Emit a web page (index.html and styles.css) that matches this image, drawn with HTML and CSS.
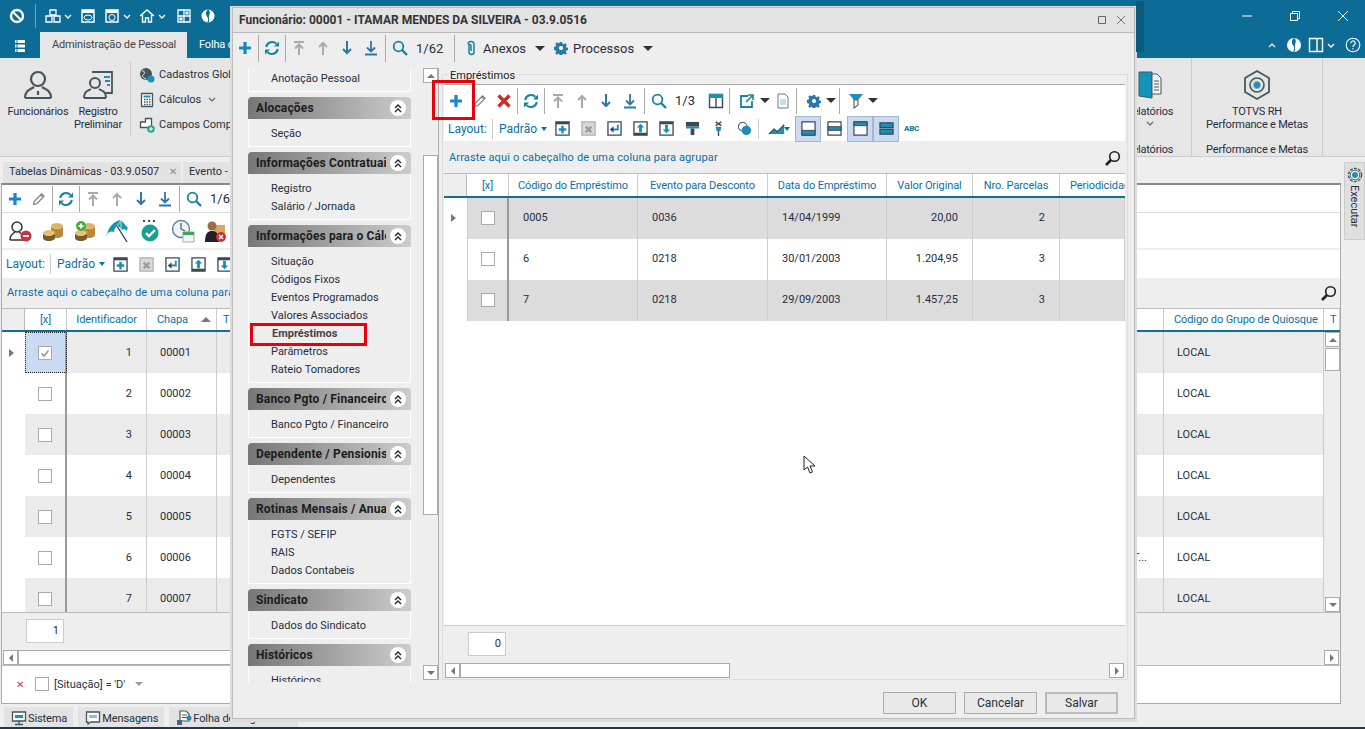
FILE: index.html
```html
<!DOCTYPE html>
<html>
<head>
    <title>Funcionário - TOTVS RH</title>
    <meta charset="utf-8">
    <meta name="viewport" content="width=device-width, initial-scale=1">
    <link rel="stylesheet" href="styles.css">
</head>
<body>
    <svg class="defs">
        <symbol id="i-plus" viewBox="0 0 16 16"><path d="M8 2v12M2 8h12" fill="none" stroke="currentColor" stroke-width="3.2"/></symbol>
        <symbol id="i-pencil" viewBox="0 0 16 16"><path d="M2.5 13.5l.8-3.2 7.4-7.4 2.4 2.4-7.4 7.4zM9.7 3.9l2.4 2.4" fill="none" stroke="currentColor" stroke-width="1.1"/></symbol>
        <symbol id="i-x" viewBox="0 0 16 16"><path d="M2.5 2.5l11 11M13.5 2.5l-11 11" fill="none" stroke="currentColor" stroke-width="3.4"/></symbol>
        <symbol id="i-refresh" viewBox="0 0 16 16"><path d="M2.2 7A6 6 0 0 1 12.4 3.8M13.8 9A6 6 0 0 1 3.6 12.2" fill="none" stroke="currentColor" stroke-width="2"/><path d="M15 1.6v5h-5zM1 14.4v-5h5z" fill="currentColor"/></symbol>
        <symbol id="i-top" viewBox="0 0 16 16"><path d="M3 2h10M8 15V5M4 8.5l4-4 4 4" fill="none" stroke="currentColor" stroke-width="2"/></symbol>
        <symbol id="i-up" viewBox="0 0 16 16"><path d="M8 15V3M4 7l4-4 4 4" fill="none" stroke="currentColor" stroke-width="2"/></symbol>
        <symbol id="i-down" viewBox="0 0 16 16"><path d="M8 1v12M4 9l4 4 4-4" fill="none" stroke="currentColor" stroke-width="2"/></symbol>
        <symbol id="i-bottom" viewBox="0 0 16 16"><path d="M8 1v10M4 7.5l4 4 4-4M2 14.5h12" fill="none" stroke="currentColor" stroke-width="1.8"/></symbol>
        <symbol id="i-search" viewBox="0 0 16 16"><circle cx="6.5" cy="6.5" r="4.8" fill="none" stroke="currentColor" stroke-width="1.8"/><path d="M10 10l5 5" stroke="currentColor" stroke-width="2.4"/></symbol>
        <symbol id="i-lens" viewBox="0 0 16 16"><circle cx="9.5" cy="6.5" r="4.8" fill="none" stroke="currentColor" stroke-width="1.6"/><path d="M6 10l-5 5" stroke="currentColor" stroke-width="2.6"/></symbol>
        <symbol id="i-clip" viewBox="0 0 16 16"><path d="M5 4.5a3 3 0 0 1 6 0v7.5a2.5 2.5 0 0 1-5 0V5.500a1 1 0 0 1 2 0V11" fill="none" stroke="currentColor" stroke-width="1.5"/></symbol>
        <symbol id="i-gear" viewBox="0 0 16 16"><path d="M6.7 1h2.600l.4 2 1.400.6 1.700-1.100 1.800 1.800-1.100 1.700.6 1.400 2 .4v2.600l-2 .4-.6 1.400 1.100 1.700-1.800 1.800-1.700-1.100-1.400.6-.4 2H6.700l-.4-2-1.400-.6-1.700 1.100-1.800-1.800 1.100-1.700-.6-1.400-2-.4V6.700l2-.4.6-1.400-1.100-1.700 1.800-1.800 1.700 1.100 1.400-.6z" fill="currentColor"/><circle cx="8" cy="8" r="2.400" fill="#fff"/></symbol>
        <symbol id="i-cols" viewBox="0 0 16 16"><path d="M1.5 1.5h13v13h-13zM8 5v9.500" fill="none" stroke="#3a4a55" stroke-width="1.4"/><path d="M1 1h14v4H1z" fill="#1b8fb5"/></symbol>
        <symbol id="i-export" viewBox="0 0 16 16"><path d="M9 3H2v11h11V8" fill="none" stroke="currentColor" stroke-width="1.8"/><path d="M7 9l6-6M9 2h5v5" fill="none" stroke="currentColor" stroke-width="1.6"/></symbol>
        <symbol id="i-doc" viewBox="0 0 16 16"><path d="M3 1h7l3 3v11H3z" fill="#fff" stroke="#6b7b86"/><path d="M5 6h6v6H5z" fill="#bfe0e8"/></symbol>
        <symbol id="i-funnel" viewBox="0 0 16 16"><path d="M1 1h14L10 7H6z" fill="#1b8fb5"/><path d="M6 7h4v5l-4 3z" fill="none" stroke="#5a6870" stroke-width="1.2"/></symbol>
        <symbol id="i-box-plus" viewBox="0 0 16 16"><path d="M1 1h14v14H1z" fill="#fff" stroke="#3a4a55" stroke-width="1.4"/><path d="M1 1h14v2.500H1z" fill="#3a4a55"/><path d="M8 5v8M4 9h8" stroke="#1b8fb5" stroke-width="2.6"/></symbol>
        <symbol id="i-box-x" viewBox="0 0 16 16"><path d="M1 1h14v14H1z" fill="#d8d8d8" stroke="#b0b0b0" stroke-width="1.4"/><path d="M5 6l6 6M11 6l-6 6" stroke="#9a9a9a" stroke-width="2.4"/></symbol>
        <symbol id="i-box-enter" viewBox="0 0 16 16"><path d="M1 1h14v14H1z" fill="#fff" stroke="#3a4a55" stroke-width="1.4"/><path d="M11.5 4v5H6" fill="none" stroke="#1b8fb5" stroke-width="2"/><path d="M7 5.500v7L3 9z" fill="#3a4a55"/></symbol>
        <symbol id="i-box-up" viewBox="0 0 16 16"><path d="M1 1h14v14H1z" fill="#fff" stroke="#3a4a55" stroke-width="1.4"/><path d="M1 12.500h14V15H1z" fill="#3a4a55"/><path d="M8 3l4 4H9.500v5h-3V7H4z" fill="#1b8fb5"/></symbol>
        <symbol id="i-box-down" viewBox="0 0 16 16"><path d="M1 1h14v14H1z" fill="#fff" stroke="#3a4a55" stroke-width="1.4"/><path d="M1 1h14v2.500H1z" fill="#3a4a55"/><path d="M8 13l4-4H9.500V4h-3v5H4z" fill="#1b8fb5"/></symbol>
        <symbol id="i-roller" viewBox="0 0 16 16"><path d="M1 1h14v5H1z" fill="#3a4a55"/><path d="M1 6h14v2H1z" fill="#1b8fb5"/><path d="M6 8h4v7H6z" fill="#3a4a55"/></symbol>
        <symbol id="i-pin" viewBox="0 0 16 16"><path d="M5 1l6 4M11 1L5 5" stroke="#3a4a55" stroke-width="1.5"/><path d="M5 6h6l-1 5H6z" fill="#1b8fb5"/><path d="M8 11v5" stroke="#3a4a55" stroke-width="1.5"/></symbol>
        <symbol id="i-circles" viewBox="0 0 16 16"><circle cx="6" cy="6" r="4.5" fill="#fff" stroke="#5a6870" stroke-width="1.2"/><circle cx="10" cy="10" r="5" fill="#1b8fb5"/></symbol>
        <symbol id="i-chart" viewBox="0 0 20 16"><path d="M1 14l6-6 4 3 8-8v11z" fill="#1b8fb5"/><path d="M1 14l6-6 4 3 8-8" fill="none" stroke="#3a4a55" stroke-width="1.4"/></symbol>
        <symbol id="i-view-bottom" viewBox="0 0 16 16"><path d="M1 1h14v14H1z" fill="#fff" stroke="#3a4a55" stroke-width="1.3"/><path d="M1 10h14v5H1z" fill="#1b8fb5" stroke="#3a4a55"/></symbol>
        <symbol id="i-view-mid" viewBox="0 0 16 16"><path d="M1 1h14v14H1z" fill="#fff" stroke="#3a4a55" stroke-width="1.3"/><path d="M1 6h14v4H1z" fill="#1b8fb5" stroke="#3a4a55"/></symbol>
        <symbol id="i-view-top" viewBox="0 0 16 16"><path d="M1 1h14v14H1z" fill="#fff" stroke="#3a4a55" stroke-width="1.3"/><path d="M1 1h14v4H1z" fill="#1b8fb5" stroke="#3a4a55"/></symbol>
        <symbol id="i-view-two" viewBox="0 0 16 16"><path d="M1 2h14v5H1zM1 9h14v5H1z" fill="#1b8fb5" stroke="#3a4a55" stroke-width="1.3"/></symbol>
        <symbol id="i-coins" viewBox="0 0 24 24"><ellipse cx="16" cy="7" rx="6" ry="3" fill="#e0b560"/><path d="M10 7v9c0 1.600 2.700 3 6 3s6-1.400 6-3V7c0 1.600-2.700 3-6 3s-6-1.400-6-3z" fill="#b98a3c"/><ellipse cx="8" cy="14" rx="6" ry="3" fill="#eac070"/><path d="M2 14v5c0 1.600 2.700 3 6 3s6-1.400 6-3v-5c0 1.600-2.700 3-6 3s-6-1.400-6-3z" fill="#7c5a28"/></symbol>
    </svg>

    <div class="app">
        <div class="topbar">
            <div class="qa">
                <svg class="qa-ic first" viewBox="0 0 16 16"><circle cx="8" cy="8" r="6" fill="none" stroke="#fff" stroke-width="2.4"/><path d="M4 4l8 8" stroke="#fff" stroke-width="2"/></svg>
                <span class="qa-sep"></span>
                <svg class="qa-ic" viewBox="0 0 16 16"><path d="M5 2h6v5H5zM1 8h6v6H1zM9 8h6v6H9z" fill="#0d6c96" stroke="#fff" stroke-width="1.3"/></svg>
                <svg class="chev" viewBox="0 0 8 5"><path d="M1 1l3 3 3-3" fill="none" stroke="#fff" stroke-width="1.3"/></svg>
                <svg class="qa-ic" viewBox="0 0 16 16"><path d="M2 2h12v12H2z" fill="none" stroke="#fff" stroke-width="1.4"/><path d="M2 2h12v3H2z" fill="#fff"/><ellipse cx="8" cy="9.500" rx="4" ry="2.500" fill="none" stroke="#fff"/></svg>
                <svg class="qa-ic" viewBox="0 0 16 16"><path d="M2 2h12v12H2z" fill="none" stroke="#fff" stroke-width="1.4"/><path d="M2 2h12v3H2z" fill="#fff"/><circle cx="8" cy="9.500" r="3" fill="none" stroke="#fff"/></svg>
                <svg class="chev" viewBox="0 0 8 5"><path d="M1 1l3 3 3-3" fill="none" stroke="#fff" stroke-width="1.3"/></svg>
                <svg class="qa-ic" viewBox="0 0 16 16"><path d="M1 8l7-6 7 6M3.500 7v7h3v-4h3v4h3V7" fill="none" stroke="#fff" stroke-width="1.4"/></svg>
                <svg class="chev" viewBox="0 0 8 5"><path d="M1 1l3 3 3-3" fill="none" stroke="#fff" stroke-width="1.3"/></svg>
                <svg class="qa-ic grid-ic" viewBox="0 0 16 16"><path d="M2 2h12v12H2zM8 2v12M2 8h12" fill="none" stroke="#fff" stroke-width="1.3"/><path d="M9.500 3.500h3v3h-3zM3.500 9.500h3v3h-3z" fill="#fff"/></svg>
                <svg class="qa-ic" viewBox="0 0 16 16"><circle cx="8" cy="8" r="6.500" fill="#fff"/><path d="M8 1.500c-2 2-3 4-1 7s1 5 0 6c3.500 0 1.500-3 2-6s2-5-1-7z" fill="#0d6c96"/></svg>
                <div class="winbtns">
                    <svg class="win" viewBox="0 0 12 12"><path d="M1 6h10" stroke="#fff"/></svg>
                    <svg class="win" viewBox="0 0 12 12"><path d="M1.500 3.500h7v7h-7zM3.500 3.500v-2h7v7h-2" fill="none" stroke="#fff"/></svg>
                    <svg class="win" viewBox="0 0 12 12"><path d="M1 1l10 10M11 1L1 11" stroke="#fff"/></svg>
                </div>
            </div>
            <div class="tabrow">
                <svg class="menu-ic" viewBox="0 0 16 16"><path d="M3 2h10v3H3zM3 6.500h10v3H3zM3 11h10v3H3z" fill="#fff"/><path d="M5 2v12" stroke="#0d6c96"/></svg>
                <div class="rtab on">Administração de Pessoal</div>
                <div class="rtab">Folha de Pagamento</div>
                <div class="tabrow-right">
                    <svg class="chev up" viewBox="0 0 8 5"><path d="M1 4l3-3 3 3" fill="none" stroke="#fff" stroke-width="1.2"/></svg>
                    <svg class="qa-ic" viewBox="0 0 16 16"><circle cx="8" cy="8" r="7" fill="#fff"/><path d="M8 1c-2 2-3 4-1 7s1 5 0 7c3.500 0 1.500-4 2-7s2-5-1-7z" fill="#0d6c96"/></svg>
                    <svg class="qa-ic" viewBox="0 0 16 16"><path d="M1.500 1.500h13v13h-13zM9 1.500v13" fill="none" stroke="#fff" stroke-width="1.4"/></svg>
                    <svg class="chev" viewBox="0 0 8 5"><path d="M1 1l3 3 3-3" fill="none" stroke="#fff" stroke-width="1.3"/></svg>
                    <svg class="qa-ic help" viewBox="0 0 16 16"><circle cx="8" cy="8" r="6.800" fill="none" stroke="#fff" stroke-width="1.1"/><path d="M5.800 6.200a2.200 2.200 0 1 1 3.300 1.900c-.8.500-1.100.9-1.100 1.900M8 11.200v1.400" fill="none" stroke="#fff" stroke-width="1.2"/></svg>
                </div>
            </div>
        </div>

        <div class="ribbon">
            <div class="big first">
                <svg class="big-ic" viewBox="0 0 32 32"><circle cx="16" cy="10" r="7" fill="none" stroke="#46565e" stroke-width="2.2"/><path d="M3 29c0-8 6-9 9-11M29 29c0-8-6-9-9-11M3 29h26M16 22v4" fill="none" stroke="#46565e" stroke-width="2.2"/></svg>
                <span>Funcionários</span>
            </div>
            <div class="big">
                <svg class="big-ic" viewBox="0 0 32 32"><path d="M10 3h20v21H22" fill="none" stroke="#46565e" stroke-width="1.8"/><path d="M22 8h6M23 12h5M25 16h3" stroke="#1b8fb5" stroke-width="1.8"/><circle cx="13" cy="14" r="5" fill="#e6e6e6" stroke="#46565e" stroke-width="2"/><path d="M2 29c0-7 4-7 7-9M24 29c0-7-4-7-7-9M2 29h22" fill="none" stroke="#46565e" stroke-width="2"/></svg>
                <span>Registro<br>Preliminar</span>
            </div>
            <div class="rb-sep"></div>
            <div class="small-list">
                <div class="small"><svg viewBox="0 0 16 16"><circle cx="7" cy="7" r="6" fill="#46565e"/><path d="M3 4c3-1 3 3 1 4s2 4 3 4" fill="none" stroke="#e6e6e6"/><circle cx="12" cy="12" r="3.500" fill="#1b8fb5"/></svg>Cadastros Globais</div>
                <div class="small"><svg viewBox="0 0 16 16"><path d="M2.500 1.500h11v13h-11z" fill="#fff" stroke="#46565e" stroke-width="1.3"/><path d="M4.500 3.500h7v2h-7z" fill="#1b8fb5"/><path d="M5 7.500h1.500M7.500 7.500H9M10 7.500h1.500M5 10h1.500M7.500 10H9M10 10h1.500M5 12.500h1.500M7.500 12.500H9M10 12.500h1.500" stroke="#46565e" stroke-width="1.3"/></svg>Cálculos <svg class="chev dark" viewBox="0 0 8 5"><path d="M1 1l3 3 3-3" fill="none" stroke="#666" stroke-width="1.2"/></svg></div>
                <div class="small"><svg viewBox="0 0 16 16"><path d="M1.500 5h5V1.500h6v9h-11z" fill="#fff" stroke="#46565e" stroke-width="1.3"/><circle cx="12" cy="12" r="3.800" fill="#2aa58e"/><path d="M12 10v4M10 12h4" stroke="#fff"/></svg>Campos Complementares</div>
            </div>
            <div class="rb-fill"></div>
            <div class="rb-group relat">
                <div class="big wide">
                    <svg class="big-ic" viewBox="0 0 32 32"><path d="M5 3h13v26l-13-2z" fill="#1294bd" stroke="#46565e"/><path d="M18 5h5l4 4v16h-9z" fill="#f4f4f4" stroke="#46565e"/><path d="M20 12h5M20 15h5M20 18h5M20 21h5" stroke="#46565e"/></svg>
                    <span>Relatórios</span>
                    <svg class="chev dark below" viewBox="0 0 8 5"><path d="M1 1l3 3 3-3" fill="none" stroke="#666" stroke-width="1.2"/></svg>
                </div>
                <div class="rb-label">Relatórios</div>
            </div>
            <div class="rb-group perf">
                <div class="big wide">
                    <svg class="big-ic" viewBox="0 0 32 32"><path d="M16 2l12 7v14l-12 7-12-7V9z" fill="none" stroke="#46565e" stroke-width="1.8"/><circle cx="16" cy="16" r="7" fill="none" stroke="#46565e" stroke-width="1.6"/><circle cx="16" cy="16" r="3.500" fill="#1294bd" stroke="#8aa" stroke-width=".8"/></svg>
                    <span>TOTVS RH<br>Performance e Metas</span>
                </div>
                <div class="rb-label">Performance e Metas</div>
            </div>
            <div class="rb-end"></div>
        </div>

        <div class="workspace">
            <div class="doc">
                <div class="doctabs">
                    <div class="doctab">Tabelas Dinâmicas - 03.9.0507<span class="doctab-x">✕</span></div>
                    <div class="doctab">Evento - 03.9.0501</div>
                </div>
                <div class="docwin">
                    <div class="tb tb-a">
                        <span class="tool blue"><svg><use href="#i-plus"/></svg></span>
                        <span class="tool gray"><svg><use href="#i-pencil"/></svg></span>
                        <span class="sep"></span>
                        <span class="tool teal"><svg><use href="#i-refresh"/></svg></span>
                        <span class="sep"></span>
                        <span class="tool pale"><svg><use href="#i-top"/></svg></span>
                        <span class="tool pale"><svg><use href="#i-up"/></svg></span>
                        <span class="tool navy"><svg><use href="#i-down"/></svg></span>
                        <span class="tool navy"><svg><use href="#i-bottom"/></svg></span>
                        <span class="sep wide"></span>
                        <span class="tool teal"><svg><use href="#i-search"/></svg></span>
                        <span class="count">1/62</span>
                    </div>
                    <div class="tb tb-b">
                        <svg class="pic" viewBox="0 0 24 24"><circle cx="9" cy="8" r="5" fill="#fff" stroke="#333" stroke-width="1.5"/><path d="M2 21c0-6 3-6 5-8M16 21c0-6-3-6-5-8M2 21h14" fill="none" stroke="#333" stroke-width="1.5"/><circle cx="18" cy="17" r="5.500" fill="#c8323a"/><path d="M15 17h6" stroke="#fff" stroke-width="1.8"/></svg>
                        <svg class="pic"><use href="#i-coins"/></svg>
                        <svg class="pic" viewBox="0 0 24 24"><use href="#i-coins"/><circle cx="8" cy="7" r="5" fill="#35b03c"/><path d="M8 4.500v5M5.500 7h5" stroke="#fff" stroke-width="1.8"/></svg>
                        <svg class="pic" viewBox="0 0 24 24"><path d="M1 16C2 8 8 2 15 1l7 8c-1 1-1 2-1 3-2-2-4-2-6-1 0-2-2-4-4-4-2 2-3 4-3 6-2-1-5-1-8 3z" fill="#1596b0"/><path d="M11 7l10 16" stroke="#345" stroke-width="1.4"/><path d="M15 1l-4 6M15 1l0 10" stroke="#fff" stroke-width=".7"/></svg>
                        <svg class="pic" viewBox="0 0 24 24"><circle cx="12" cy="14" r="8.500" fill="#16a091"/><path d="M8 14l3 3 6-6" fill="none" stroke="#fff" stroke-width="2.4"/><path d="M5 2h2M10 2h2M15 2h2" stroke="#444" stroke-width="2"/></svg>
                        <svg class="pic" viewBox="0 0 24 24"><circle cx="10" cy="10" r="8.500" fill="#eaf2fa" stroke="#5a80a8" stroke-width="1.4"/><path d="M10 4v6l4 2" fill="none" stroke="#456" stroke-width="1.2"/><path d="M12 13h11v10H12z" fill="#f4f4f4" stroke="#aaa"/><path d="M12 13h11v3H12z" fill="#3aaa50"/></svg>
                        <svg class="pic" viewBox="0 0 24 24"><path d="M11 6h11v11H11z" fill="#d8a860"/><circle cx="9" cy="7" r="4.500" fill="#a06a48"/><path d="M2 23c0-9 3-11 7-11s7 2 7 11z" fill="#222"/><circle cx="18" cy="18" r="5" fill="#c8323a"/><path d="M16 16l4 4M20 16l-4 4" stroke="#fff" stroke-width="1.2"/></svg>
                    </div>
                    <div class="tb tb-c back-layout">
                        <span class="lay-label">Layout:</span>
                        <span class="sep short"></span>
                        <span class="lay-name">Padrão<i class="caret blue-caret"></i></span>
                        <span class="lay-ic"><svg><use href="#i-box-plus"/></svg></span>
                        <span class="lay-ic"><svg><use href="#i-box-x"/></svg></span>
                        <span class="lay-ic"><svg><use href="#i-box-enter"/></svg></span>
                        <span class="lay-ic"><svg><use href="#i-box-up"/></svg></span>
                        <span class="lay-ic"><svg><use href="#i-box-down"/></svg></span>
                    </div>
                    <div class="dragbar back-drag">
                        <span>Arraste aqui o cabeçalho de uma coluna para agrupar</span>
                        <svg class="lens"><use href="#i-lens"/></svg>
                    </div>
                    <div class="bgrid-head">
                        <div class="gh ind"></div>
                        <div class="gh ctr">[x]</div>
                        <div class="gh ctr">Identificador</div>
                        <div class="gh sorted">Chapa<i class="sort"></i></div>
                        <div class="gh">Tipo</div>
                        <div class="gh wide-gh">Código do Grupo de Quiosque</div>
                        <div class="gh last">T</div>
                    </div>
                    <div class="bgrid-body">
                        <div class="bgrid-rows">
                            <div class="brow odd">
                                <div class="gc ind"><i class="tri"></i></div>
                                <div class="gc chk focus"><span class="cb checked"><svg viewBox="0 0 12 12"><path d="M2.500 6.500l2.500 2.500 4.500-5.500" fill="none" stroke="#888" stroke-width="1.2"/></svg></span></div>
                                <div class="gc num">1</div>
                                <div class="gc code">00001</div>
                                <div class="gc"></div>
                                <div class="gc code">LOCAL</div>
                            </div>
                            <div class="brow">
                                <div class="gc ind"></div>
                                <div class="gc chk"><span class="cb"></span></div>
                                <div class="gc num">2</div>
                                <div class="gc code">00002</div>
                                <div class="gc"></div>
                                <div class="gc code">LOCAL</div>
                            </div>
                            <div class="brow odd">
                                <div class="gc ind"></div>
                                <div class="gc chk"><span class="cb"></span></div>
                                <div class="gc num">3</div>
                                <div class="gc code">00003</div>
                                <div class="gc"></div>
                                <div class="gc code">LOCAL</div>
                            </div>
                            <div class="brow">
                                <div class="gc ind"></div>
                                <div class="gc chk"><span class="cb"></span></div>
                                <div class="gc num">4</div>
                                <div class="gc code">00004</div>
                                <div class="gc"></div>
                                <div class="gc code">LOCAL</div>
                            </div>
                            <div class="brow odd">
                                <div class="gc ind"></div>
                                <div class="gc chk"><span class="cb"></span></div>
                                <div class="gc num">5</div>
                                <div class="gc code">00005</div>
                                <div class="gc"></div>
                                <div class="gc code">LOCAL</div>
                            </div>
                            <div class="brow">
                                <div class="gc ind"></div>
                                <div class="gc chk"><span class="cb"></span></div>
                                <div class="gc num">6</div>
                                <div class="gc code">00006</div>
                                <div class="gc rest">T...</div>
                                <div class="gc code">LOCAL</div>
                            </div>
                            <div class="brow odd">
                                <div class="gc ind"></div>
                                <div class="gc chk"><span class="cb"></span></div>
                                <div class="gc num">7</div>
                                <div class="gc code">00007</div>
                                <div class="gc"></div>
                                <div class="gc code">LOCAL</div>
                            </div>
                        </div>
                        <div class="vscroll">
                            <span class="sbtn"><i class="arr-up"></i></span>
                            <span class="vthumb"></span>
                            <span class="vfill"></span>
                            <span class="sbtn"><i class="arr-down"></i></span>
                        </div>
                    </div>
                    <div class="totals back-totals"><span class="total-box">1</span></div>
                    <div class="hscroll back-h">
                        <span class="sbtn"><i class="arr-left"></i></span>
                        <span class="hthumb long"></span>
                        <span class="sbtn"><i class="arr-right"></i></span>
                    </div>
                    <div class="filterbar">
                        <span class="fx">✕</span>
                        <span class="cb"></span>
                        <span class="ftext">[Situação] = 'D'</span>
                        <i class="caret gray-caret"></i>
                    </div>
                </div>
            </div>
            <div class="side">
                <div class="side-tab">
                    <svg class="side-gear" viewBox="0 0 18 18"><circle cx="9" cy="9" r="6.500" fill="#fff" stroke="#46565e" stroke-width="1.5" stroke-dasharray="3 1.100"/><circle cx="9" cy="9" r="4.800" fill="none" stroke="#46565e"/><circle cx="9" cy="9" r="3" fill="#1294bd"/></svg>
                    <span>Executar</span>
                </div>
            </div>
        </div>

        <div class="statusbar">
            <div class="stab"><svg viewBox="0 0 16 16"><path d="M1.500 2h13v9h-13z" fill="#fff" stroke="#46565e" stroke-width="1.3"/><path d="M4 5h8v3H4z" fill="#1b8fb5"/><path d="M8 11v3M4 14.500h8" stroke="#46565e" stroke-width="1.3"/></svg>Sistema</div>
            <div class="stab"><svg viewBox="0 0 16 16"><path d="M1.500 2h13v10H6l-3 2v-2H1.500z" fill="#fff" stroke="#46565e" stroke-width="1.3"/><path d="M4 5h8v3H4z" fill="#7fc4dc"/></svg>Mensagens</div>
            <div class="stab"><svg viewBox="0 0 16 16"><path d="M4 1h6l3 3v7H4z" fill="#fff" stroke="#46565e" stroke-width="1.2"/><path d="M6 5h5M6 7.500h5" stroke="#46565e"/><path d="M1 10h5v5H1z" fill="#3a6a86"/><circle cx="13" cy="8" r="2.500" fill="#1b8fb5"/></svg>Folha de Pagamento</div>
        </div>
    </div>

    <div class="dialog">
        <div class="dlg-shade"></div>
        <div class="dlg-title">
            <span class="dlg-name">Funcionário: 00001 - ITAMAR MENDES DA SILVEIRA - 03.9.0516</span>
            <svg class="dlg-btn" viewBox="0 0 10 10"><path d="M1.500 1.500h7v7h-7z" fill="none" stroke="#666"/></svg>
            <svg class="dlg-btn" viewBox="0 0 10 10"><path d="M1 1l8 8M9 1L1 9" stroke="#777"/></svg>
        </div>
        <div class="tb dlg-tools">
            <span class="tool blue"><svg><use href="#i-plus"/></svg></span>
            <span class="sep tall"></span>
            <span class="tool teal"><svg><use href="#i-refresh"/></svg></span>
            <span class="sep tall"></span>
            <span class="tool pale"><svg><use href="#i-top"/></svg></span>
            <span class="tool pale"><svg><use href="#i-up"/></svg></span>
            <span class="tool navy"><svg><use href="#i-down"/></svg></span>
            <span class="tool navy"><svg><use href="#i-bottom"/></svg></span>
            <span class="sep tall wide"></span>
            <span class="tool teal"><svg><use href="#i-search"/></svg></span>
            <span class="count">1/62</span>
            <span class="sep tall after-count"></span>
            <span class="tool teal"><svg><use href="#i-clip"/></svg></span>
            <span class="tb-text">Anexos</span>
            <i class="caret dark-caret"></i>
            <span class="tool navy gear-tool"><svg><use href="#i-gear"/></svg></span>
            <span class="tb-text">Processos</span>
            <i class="caret dark-caret"></i>
        </div>
        <div class="dlg-body">
            <div class="nav">
                <div class="panel cut">
                    <div class="item">Anotação Pessoal</div>
                </div>
                <div class="ghead"><span>Alocações</span><i class="collapse"><svg viewBox="0 0 10 10"><path d="M2 5l3-3 3 3M2 9l3-3 3 3" fill="none" stroke="#222" stroke-width="1.3"/></svg></i></div>
                <div class="panel">
                    <div class="item">Seção</div>
                </div>
                <div class="ghead"><span>Informações Contratuais</span><i class="collapse"><svg viewBox="0 0 10 10"><path d="M2 5l3-3 3 3M2 9l3-3 3 3" fill="none" stroke="#222" stroke-width="1.3"/></svg></i></div>
                <div class="panel">
                    <div class="item">Registro</div>
                    <div class="item">Salário / Jornada</div>
                </div>
                <div class="ghead"><span>Informações para o Cálculo</span><i class="collapse"><svg viewBox="0 0 10 10"><path d="M2 5l3-3 3 3M2 9l3-3 3 3" fill="none" stroke="#222" stroke-width="1.3"/></svg></i></div>
                <div class="panel">
                    <div class="item">Situação</div>
                    <div class="item">Códigos Fixos</div>
                    <div class="item">Eventos Programados</div>
                    <div class="item">Valores Associados</div>
                    <div class="item current">Empréstimos</div>
                    <div class="item">Parâmetros</div>
                    <div class="item">Rateio Tomadores</div>
                </div>
                <div class="ghead"><span>Banco Pgto / Financeiro</span><i class="collapse"><svg viewBox="0 0 10 10"><path d="M2 5l3-3 3 3M2 9l3-3 3 3" fill="none" stroke="#222" stroke-width="1.3"/></svg></i></div>
                <div class="panel">
                    <div class="item">Banco Pgto / Financeiro</div>
                </div>
                <div class="ghead"><span>Dependente / Pensionista</span><i class="collapse"><svg viewBox="0 0 10 10"><path d="M2 5l3-3 3 3M2 9l3-3 3 3" fill="none" stroke="#222" stroke-width="1.3"/></svg></i></div>
                <div class="panel">
                    <div class="item">Dependentes</div>
                </div>
                <div class="ghead"><span>Rotinas Mensais / Anuais</span><i class="collapse"><svg viewBox="0 0 10 10"><path d="M2 5l3-3 3 3M2 9l3-3 3 3" fill="none" stroke="#222" stroke-width="1.3"/></svg></i></div>
                <div class="panel">
                    <div class="item">FGTS / SEFIP</div>
                    <div class="item">RAIS</div>
                    <div class="item">Dados Contabeis</div>
                </div>
                <div class="ghead"><span>Sindicato</span><i class="collapse"><svg viewBox="0 0 10 10"><path d="M2 5l3-3 3 3M2 9l3-3 3 3" fill="none" stroke="#222" stroke-width="1.3"/></svg></i></div>
                <div class="panel">
                    <div class="item">Dados do Sindicato</div>
                </div>
                <div class="ghead"><span>Históricos</span><i class="collapse"><svg viewBox="0 0 10 10"><path d="M2 5l3-3 3 3M2 9l3-3 3 3" fill="none" stroke="#222" stroke-width="1.3"/></svg></i></div>
                <div class="panel">
                    <div class="item">Históricos</div>
                </div>
            </div>
            <div class="nav-scroll">
                <span class="sbtn"><i class="arr-up"></i></span>
                <span class="nav-thumb"></span>
                <span class="vfill"></span>
                <span class="sbtn"><i class="arr-down"></i></span>
            </div>
            <div class="group">
                <span class="legend">Empréstimos</span>
                <div class="group-in">
                    <div class="tb tb-main">
                        <span class="tool blue"><svg><use href="#i-plus"/></svg></span>
                        <span class="tool gray"><svg><use href="#i-pencil"/></svg></span>
                        <span class="tool red"><svg><use href="#i-x"/></svg></span>
                        <span class="sep"></span>
                        <span class="tool teal"><svg><use href="#i-refresh"/></svg></span>
                        <span class="sep"></span>
                        <span class="tool pale"><svg><use href="#i-top"/></svg></span>
                        <span class="tool pale"><svg><use href="#i-up"/></svg></span>
                        <span class="tool navy"><svg><use href="#i-down"/></svg></span>
                        <span class="tool navy"><svg><use href="#i-bottom"/></svg></span>
                        <span class="sep wide"></span>
                        <span class="tool teal"><svg><use href="#i-search"/></svg></span>
                        <span class="count short">1/3</span>
                        <span class="tool cols"><svg><use href="#i-cols"/></svg></span>
                        <span class="sep"></span>
                        <span class="tool teal exp"><svg><use href="#i-export"/></svg></span>
                        <i class="caret dark-caret slim"></i>
                        <span class="tool"><svg><use href="#i-doc"/></svg></span>
                        <span class="sep"></span>
                        <span class="tool navy gear2"><svg><use href="#i-gear"/></svg></span>
                        <i class="caret dark-caret slim tight"></i>
                        <span class="sep sep-f"></span>
                        <span class="tool funnel"><svg><use href="#i-funnel"/></svg></span>
                        <i class="caret dark-caret slim tight"></i>
                    </div>
                    <div class="tb tb-c main-layout">
                        <span class="lay-label">Layout:</span>
                        <span class="sep short"></span>
                        <span class="lay-name">Padrão<i class="caret blue-caret"></i></span>
                        <span class="lay-ic"><svg><use href="#i-box-plus"/></svg></span>
                        <span class="lay-ic"><svg><use href="#i-box-x"/></svg></span>
                        <span class="lay-ic"><svg><use href="#i-box-enter"/></svg></span>
                        <span class="lay-ic"><svg><use href="#i-box-up"/></svg></span>
                        <span class="lay-ic"><svg><use href="#i-box-down"/></svg></span>
                        <span class="lay-ic"><svg><use href="#i-roller"/></svg></span>
                        <span class="lay-ic"><svg><use href="#i-pin"/></svg></span>
                        <span class="lay-ic"><svg><use href="#i-circles"/></svg></span>
                        <span class="sep short before-chart"></span>
                        <span class="lay-ic chart"><svg viewBox="0 0 20 16"><use href="#i-chart"/></svg></span>
                        <i class="caret blue-caret chart-caret"></i>
                        <span class="view on first-view"><svg><use href="#i-view-bottom"/></svg></span>
                        <span class="view"><svg><use href="#i-view-mid"/></svg></span>
                        <span class="view on"><svg><use href="#i-view-top"/></svg></span>
                        <span class="view on"><svg><use href="#i-view-two"/></svg></span>
                        <span class="abc">ABC</span>
                    </div>
                    <div class="dragbar main-drag">
                        <span>Arraste aqui o cabeçalho de uma coluna para agrupar</span>
                        <svg class="lens"><use href="#i-lens"/></svg>
                    </div>
                    <div class="lgrid-head">
                        <div class="gh ind"></div>
                        <div class="gh ctr">[x]</div>
                        <div class="gh ctr">Código do Empréstimo</div>
                        <div class="gh ctr">Evento para Desconto</div>
                        <div class="gh ctr">Data do Empréstimo</div>
                        <div class="gh ctr">Valor Original</div>
                        <div class="gh ctr">Nro. Parcelas</div>
                        <div class="gh last-l">Periodicidade</div>
                    </div>
                    <div class="lgrid-body">
                        <div class="lrow alt">
                            <div class="gc ind"><i class="tri"></i></div>
                            <div class="gc chk"><span class="cb"></span></div>
                            <div class="gc lcode">0005</div>
                            <div class="gc lcode">0036</div>
                            <div class="gc lcode">14/04/1999</div>
                            <div class="gc num">20,00</div>
                            <div class="gc num">2</div>
                            <div class="gc"></div>
                        </div>
                        <div class="lrow">
                            <div class="gc ind"></div>
                            <div class="gc chk"><span class="cb"></span></div>
                            <div class="gc lcode">6</div>
                            <div class="gc lcode">0218</div>
                            <div class="gc lcode">30/01/2003</div>
                            <div class="gc num">1.204,95</div>
                            <div class="gc num">3</div>
                            <div class="gc"></div>
                        </div>
                        <div class="lrow alt">
                            <div class="gc ind"></div>
                            <div class="gc chk"><span class="cb"></span></div>
                            <div class="gc lcode">7</div>
                            <div class="gc lcode">0218</div>
                            <div class="gc lcode">29/09/2003</div>
                            <div class="gc num">1.457,25</div>
                            <div class="gc num">3</div>
                            <div class="gc"></div>
                        </div>
                    </div>
                    <div class="totals main-totals"><span class="total-box">0</span></div>
                    <div class="hscroll main-h">
                        <span class="sbtn"><i class="arr-left"></i></span>
                        <span class="hthumb"></span>
                        <span class="sbtn"><i class="arr-right"></i></span>
                    </div>
                </div>
            </div>
        </div>
        <div class="dlg-foot">
            <button class="dbtn">OK</button>
            <button class="dbtn">Cancelar</button>
            <button class="dbtn def">Salvar</button>
        </div>

        <div class="mark mark-plus"></div>
        <div class="mark mark-item"></div>
        <svg class="cursor" viewBox="0 0 13 19"><path d="M1 1v14l3.500-3 2.500 6 2.500-1-2.500-6H12z" fill="#fff" stroke="#222" stroke-width="1"/></svg>
    </div>
</body>
</html>
```

FILE: styles.css
```css
* { margin: 0; padding: 0; box-sizing: border-box; }
html, body { height: 729px; overflow: hidden; }
body { font-family: Roboto, "Liberation Sans", sans-serif; font-size: 11px; color: #262d40; background: #eee; }
i { display: block; font-style: normal; }
svg { display: block; }
.defs { display: none; }
.app { display: flex; flex-direction: column; height: 729px; }

/* top blue bar */
.topbar { background: #0d6c96; height: 58px; color: white; flex: none; }
.qa { display: flex; align-items: center; height: 32px; }
.qa-ic { width: 16px; height: 16px; margin-left: 8px; flex: none; }
.qa-ic.first { margin-left: 9px; }
.grid-ic { margin-left: 10px; }
.qa-sep { width: 1px; height: 24px; background: #6aa8c2; margin: 0 1px 0 10px; }
.chev { width: 8px; height: 5px; margin-left: 3px; flex: none; }
.chev.dark { display: inline-block; margin-left: 7px; }
.chev.dark.below { margin: 3px auto 0; }
.winbtns { margin-left: auto; display: flex; align-items: center; gap: 36px; padding-right: 16px; }
.win { width: 12px; height: 12px; }
.tabrow { display: flex; height: 26px; align-items: stretch; }
.menu-ic { width: 16px; height: 16px; margin: 6px 12px 0 12px; }
.rtab { padding: 0 12px; line-height: 26px; letter-spacing: -0.15px; white-space: nowrap; }
.rtab.on { background: #e6e6e6; color: #444; width: 147px; }
.tabrow-right { margin-left: auto; display: flex; align-items: center; padding-right: 4px; }
.tabrow-right .qa-ic { margin-left: 3px; margin-right: 3px; }
.tabrow-right .chev { margin-left: 0; }
.tabrow-right .chev.up { margin-right: 7px; }
.tabrow-right .help { margin-left: 10px; margin-right: 0; }

/* ribbon */
.ribbon { display: flex; height: 99px; background: #e6e6e6; border-bottom: 1px solid #ccc; flex: none; }
.big { width: 60px; display: flex; flex-direction: column; align-items: center; text-align: center; line-height: 13px; padding-top: 11px; letter-spacing: -0.2px; }
.big.first { margin-left: 8px; }
.big-ic { width: 32px; height: 32px; margin-bottom: 4px; }
.rb-sep { width: 1px; height: 74px; margin: 4px 8px 0 2px; background: #ccc; }
.small-list { display: flex; flex-direction: column; padding-top: 4px; }
.small { display: flex; align-items: center; height: 25px; white-space: nowrap; }
.small svg:first-child { width: 16px; height: 16px; margin-right: 4px; }
.rb-fill { flex: 1; }
.rb-group { display: flex; flex-direction: column; border-right: 1px solid #ccc; }
.relat { width: 84px; }
.perf { width: 131px; }
.big.wide { width: 100%; height: 85px; }
.rb-label { text-align: center; line-height: 13px; letter-spacing: -0.2px; }
.rb-end { width: 42px; }

/* back document */
.workspace { display: flex; flex: 1; min-height: 0; }
.doc { width: 1341px; padding-top: 5px; display: flex; flex-direction: column; }
.doctabs { display: flex; height: 21px; padding-left: 3px; gap: 2px; }
.doctab { background: #e2e2e2; padding: 0 0 0 6px; line-height: 20px; display: flex; white-space: nowrap; width: 178px; }
.doctab-x { color: #888; margin-left: 10px; font-size: 10px; }
.docwin { flex: 1; display: flex; flex-direction: column; margin-left: 1px; border: 1px solid #aaa; border-top: 2px solid #888; min-height: 0; }
.side { flex: 1; padding: 5px 0 0 3px; }
.side-tab { background: #dfdfdf; border: 1px solid #ccc; height: 78px; padding-top: 3px; display: flex; flex-direction: column; align-items: center; }
.side-tab span { writing-mode: vertical-rl; margin-top: 1px; }
.side-gear { width: 18px; height: 18px; }

/* toolbars */
.tb { display: flex; align-items: center; background: white; flex: none; }
.tb-a { height: 28px; padding-left: 1px; border-bottom: 1px solid #ddd; }
.tb-b { height: 36px; gap: 8.5px; padding-left: 6px; border-bottom: 1px solid #eee; }
.tb-c { height: 25px; }
.back-layout { margin-top: 1px; height: 28px; padding-left: 4px; }
.tool { width: 24px; height: 24px; display: flex; align-items: center; justify-content: center; flex: none; }
.tool svg { width: 16px; height: 16px; }
.blue { color: #1a86c8; }
.gray { color: #777; }
.red { color: #c9302c; }
.teal { color: #17839c; }
.pale { color: #aaa; }
.navy { color: #2b78a8; }
.sep { width: 1px; height: 26px; background: #aaa; margin: 0 1px; flex: none; }
.sep.tall { height: 27px; }
.sep.wide { margin: 0 2px; }
.sep.short { height: 20px; background: #ccc; margin: 0 6px 0 4px; }
.sep.short.before-chart { margin-left: 1px; }
.count { font-size: 13px; margin-left: 4px; width: 28px; }
.count.short { width: 24px; }
.cols { margin-left: 5px; }
.exp { margin-left: 4px; }
.gear2 { margin-left: 4px; }
.gear2 svg, .gear-tool svg { width: 14px; height: 14px; }
.sep-f { margin-left: 3px; }
.funnel { margin-left: 3px; }
.after-count { margin-left: 10px; margin-right: 4px; }
.caret { width: 0; height: 0; border-left: 5px solid transparent; border-right: 5px solid transparent; border-top: 5px solid #333; flex: none; }
.dark-caret { margin-left: 9px; }
.dark-caret.slim { margin: 0 1px; border-width: 5px 5px 0; }
.dark-caret.tight { margin: 0; }
.blue-caret { border-width: 4px 3px 0; border-top-color: #0a6fa6; margin-left: 4px; }
.chart-caret { margin-left: -3px; }
.gray-caret { border-width: 4px 4px 0; border-top-color: #999; margin-left: 10px; }
.tb-text { font-size: 13px; }
.gear-tool { margin-left: 4px; }
.pic { width: 24px; height: 24px; flex: none; }
.lay-label { color: #0a6fa6; font-size: 12px; width: 40px; }
.lay-name { color: #0a6fa6; font-size: 12px; display: flex; align-items: center; width: 50px; }
.lay-ic { width: 26px; display: flex; justify-content: center; flex: none; }
.lay-ic svg { width: 15px; height: 15px; }
.lay-ic.chart { width: 22px; }
.lay-ic.chart svg { width: 17px; height: 14px; }
.view { width: 26px; height: 26px; display: flex; align-items: center; justify-content: center; flex: none; }
.view svg { width: 15px; height: 15px; }
.view.on { background: #c9daf2; border: 1px solid #a5b5cb; }
.first-view { margin-left: 5px; }
.abc { font-size: 8px; font-weight: 900; color: #1f7f9c; margin-left: 5px; letter-spacing: -0.3px; }
.main-layout { padding-left: 4px; }

.dragbar { display: flex; align-items: center; justify-content: space-between; color: #0a6fa6; flex: none; }
.dragbar span { letter-spacing: 0.15px; }
.back-drag { height: 30px; padding: 0 3px 1px 5px; }
.main-drag { height: 32px; padding: 1px 4px 0 5px; }
.lens { width: 16px; height: 16px; color: #222; }

/* grids */
.gh { background: white; color: #0a6fa6; border-right: 1px solid #ccc; display: flex; align-items: center; padding-left: 6px; white-space: nowrap; overflow: hidden; letter-spacing: -0.1px; }
.gh.ind { background: #eee; border-right: 1px solid #bbb; }
.gh.ctr { justify-content: center; padding-left: 0; }
.gh.sorted { padding-left: 10px; justify-content: space-between; padding-right: 5px; }
.gh.wide-gh { padding-left: 10px; }
.sort { border-left: 5px solid transparent; border-right: 5px solid transparent; border-bottom: 5px solid #777; }
.gc { display: flex; align-items: center; border-right: 1px solid #ccc; white-space: nowrap; overflow: hidden; }
.gc.ind { background: white; border-right: 0; justify-content: center; padding-right: 4px; }
.gc.chk { justify-content: center; border-right: 2px solid #999; }
.gc.num { justify-content: flex-end; padding-right: 14px; }
.gc.code { padding-left: 13px; }
.gc.lcode { padding-left: 14px; }
.gc.rest { justify-content: flex-end; padding-right: 16px; }
.tri { border-top: 4px solid transparent; border-bottom: 4px solid transparent; border-left: 5px solid #777; }
.cb { width: 14px; height: 14px; border: 1px solid #aaa; background: white; display: block; flex: none; }
.cb svg { width: 12px; height: 12px; }
.focus { background: #c9daf2; outline: 1px dotted #222; outline-offset: -1px; }

.bgrid-head { display: grid; grid-template-columns: 23px 42px 80px 70px 947px 160px 1fr; height: 24px; border-top: 1px solid #bbb; border-bottom: 2px solid #0f7094; flex: none; }
.bgrid-body { display: flex; height: 281px; border-bottom: 1px solid #bbb; background: #eee; flex: none; overflow: hidden; }
.bgrid-rows { width: 1322px; }
.brow { display: grid; grid-template-columns: 23px 42px 80px 70px 947px 160px; height: 41px; background: white; }
.brow.odd { background: #ebebeb; }
.vscroll { flex: 1; display: flex; flex-direction: column; padding: 0 1px; background: #eee; }
.sbtn { width: 15px; height: 15px; border: 1px solid #aaa; background: white; display: flex; align-items: center; justify-content: center; flex: none; }
.vthumb { width: 15px; height: 23px; margin-top: 1px; background: white; border: 1px solid #aaa; flex: none; }
.vfill { flex: 1; }
.arr-up { border-left: 4px solid transparent; border-right: 4px solid transparent; border-bottom: 4px solid #777; }
.arr-down { border-left: 4px solid transparent; border-right: 4px solid transparent; border-top: 4px solid #777; }
.arr-left { border-top: 4px solid transparent; border-bottom: 4px solid transparent; border-right: 4px solid #777; }
.arr-right { border-top: 4px solid transparent; border-bottom: 4px solid transparent; border-left: 4px solid #777; }
.totals { display: flex; flex: none; }
.total-box { background: white; border: 1px solid #ccc; display: block; text-align: right; padding: 0 4px; }
.back-totals { height: 37px; padding: 6px 0 0 24px; }
.back-totals .total-box { width: 38px; height: 24px; line-height: 22px; }
.hscroll { display: flex; align-items: center; flex: none; }
.back-h { height: 16px; padding: 0 1px; border-bottom: 1px solid #bbb; }
.hthumb { width: 270px; height: 15px; background: white; border: 1px solid #aaa; margin-right: auto; }
.hthumb.long { width: 400px; }
.filterbar { flex: 1; background: white; display: flex; align-items: center; padding-left: 14px; padding-bottom: 1px; }
.fx { color: #d33; font-size: 10px; width: 19px; }
.ftext { margin-left: 5px; }

/* bottom tabs */
.statusbar { height: 25px; flex: none; display: flex; gap: 5px; padding: 3px 0 0 4px; border-bottom: 2px solid #1d3a4a; overflow: hidden; }
.stab { background: #e2e2e2; display: flex; align-items: center; gap: 1px; padding: 0 6px 0 7px; height: 22px; white-space: nowrap; letter-spacing: -0.1px; }
.stab svg { width: 16px; height: 16px; }

/* dialog window */
.dialog { position: absolute; left: 232px; top: 7px; width: 903px; height: 712px; background: #eee; border: 1px solid #bbb; box-shadow: 0 1px 0 2px #dcdcdc; display: flex; flex-direction: column; }
.dlg-shade { position: absolute; left: 903px; top: -7px; width: 8px; height: 51px; background: #0b5a7e; }
.dlg-title { height: 24px; background: #e3e3e3; display: flex; align-items: center; padding: 0 8px 0 6px; flex: none; }
.dlg-name { font-weight: bold; font-size: 12px; color: #333; margin-right: auto; white-space: nowrap; }
.dlg-btn { width: 10px; height: 10px; margin-left: 9px; }
.dlg-tools { height: 33px; background: #eee; border-top: 1px solid #bbb; padding-bottom: 2px; }
.dlg-body { display: flex; height: 618px; flex: none; }
.nav { width: 178px; height: 614px; margin-top: 3px; padding-left: 15px; overflow: hidden; flex: none; }
.panel { border: 1px solid white; border-top: 0; padding: 6px 0 3px; margin-bottom: 5px; }
.panel.cut { padding: 2px 0 3px; }
.item { height: 18px; line-height: 18px; padding-left: 22px; }
.item.current { font-weight: bold; color: #444; padding-left: 23px; }
.ghead { height: 22px; border-radius: 4px 4px 0 0; background: linear-gradient(to right, #777, #ccc); display: flex; align-items: center; justify-content: space-between; padding: 0 5px 0 8px; }
.ghead span { font-weight: bold; font-size: 12px; letter-spacing: 0.15px; color: #1c1c1c; width: 130px; overflow: hidden; white-space: nowrap; }
.collapse { width: 16px; height: 16px; border-radius: 50%; background: white; display: flex; align-items: center; justify-content: center; }
.collapse svg { width: 10px; height: 10px; }
.nav-scroll { width: 16px; height: 612px; margin: 3px 0 0 12px; border-right: 1px solid #aaa; display: flex; flex-direction: column; flex: none; }
.nav-thumb { width: 15px; height: 360px; margin-top: 72px; background: white; border: 1px solid #aaa; flex: none; }
.group { position: relative; width: 686px; height: 606px; margin: 9px 0 0 3px; border: 1px solid #ddd; padding: 9px 2px 1px 1px; flex: none; }
.legend { position: absolute; left: 5px; top: -6px; background: #eee; padding: 0 2px; line-height: 13px; color: #222; }
.group-in { display: flex; flex-direction: column; height: 100%; }
.tb-main { height: 32px; border-top: 1px solid #aaa; }
.lgrid-head { display: grid; grid-template-columns: 23px 42px 129px 130px 119px 86px 87px 1fr; height: 25px; border-top: 1px solid #bbb; border-bottom: 2px solid #0f7094; flex: none; }
.last-l { border-right: 0; padding-left: 10px; }
.lgrid-body { height: 428px; background: white; border-bottom: 1px solid #ccc; flex: none; }
.lrow { display: grid; grid-template-columns: 23px 42px 129px 130px 119px 86px 87px 1fr; height: 41px; }
.lrow .gc { padding-bottom: 2px; }
.lrow.alt { background: #dcdcdc; }
.lrow .gc.chk { border-left: 1px solid #ccc; }
.main-totals { height: 37px; padding: 6px 0 0 24px; }
.main-totals .total-box { width: 38px; height: 24px; line-height: 22px; }
.main-h { height: 15px; padding: 0 1px; }
.dlg-foot { flex: 1; display: flex; justify-content: flex-end; align-items: center; gap: 8px; padding: 4px 16px 0 0; }
.dbtn { width: 73px; height: 22px; background: #e9e9e9; border: 1px solid #aaa; font: inherit; font-size: 12px; color: #262d40; }
.dbtn.def { border: 2px solid #bbb; }

/* red highlights and mouse pointer over the window */
.mark { position: absolute; border: 3px solid #e8000b; }
.mark-plus { left: 199px; top: 72px; width: 43px; height: 40px; }
.mark-item { left: 17px; top: 315px; width: 117px; height: 23px; }
.cursor { position: absolute; left: 570px; top: 447px; width: 13px; height: 19px; }
```
